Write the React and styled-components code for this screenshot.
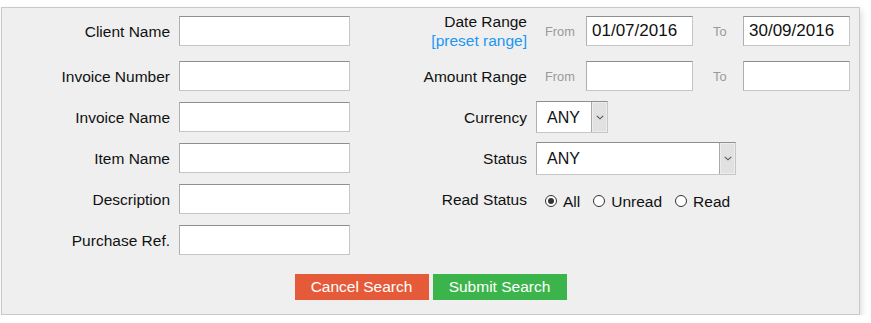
import React from 'react'
import styled, { createGlobalStyle } from 'styled-components'

const GlobalStyle = createGlobalStyle`
	body {
		margin: 0;
		background: #ffffff;
		font-family: "Liberation Sans", Arial, sans-serif;
		color: #111;
	}
`

const Panel = styled.form`
	box-sizing: border-box;
	width: 859px;
	margin: 7px 0 0 1px;
	padding: 4px 9px 14px 0;
	background: #efefef;
	border: 1px solid #c9c9c9;
	box-shadow: 2px 3px 6px rgba(0, 0, 0, 0.13);
`

const Grid = styled.div`
	display: grid;
	grid-template-columns: 168px 171px 168px 314px;
	grid-template-rows: 38px repeat(5, 30px);
	column-gap: 9px;
	row-gap: 11px;
	align-items: center;
`

const Label = styled.label`
	text-align: right;
	font-size: 15.5px;
	line-height: 19px;
	color: #111;
	grid-column: ${p => p.$col};
	grid-row: ${p => p.$row};
`

const Preset = styled.a`
	display: block;
	color: #2196f3;
	text-decoration: none;
`

const Field = styled.div`
	grid-column: ${p => p.$col};
	grid-row: ${p => p.$row};
	display: flex;
	align-items: center;
`

const TextInput = styled.input`
	box-sizing: border-box;
	width: ${p => p.$w || 171}px;
	height: 30px;
	margin: 0;
	padding: 0 5px;
	font-family: "Liberation Sans", Arial, sans-serif;
	font-size: 17px;
	color: #111;
	background: #fff;
	border: 1px solid #c6c6c6;
	border-top-color: #8f8f8f;
	border-left-color: #b0b0b0;
	outline: none;
`

const RangeLabel = styled.span`
	box-sizing: border-box;
	width: 50px;
	padding-left: ${p => p.$pad}px;
	font-size: 12.8px;
	color: #9a9a9a;
`

const SelectBox = styled.div`
	box-sizing: border-box;
	width: ${p => p.$w}px;
	height: ${p => p.$h}px;
	display: flex;
	background: #fff;
	border: 1px solid #c6c6c6;
	border-top-color: #8f8f8f;
	border-left-color: #b0b0b0;
`

const Select = styled.select`
	flex: 1;
	min-width: 0;
	appearance: none;
	border: none;
	background: transparent;
	margin: 0;
	padding: 0 0 0 10px;
	font-family: "Liberation Sans", Arial, sans-serif;
	font-size: 16px;
	color: #111;
	outline: none;
`

const Arrow = styled.span`
	box-sizing: border-box;
	width: 16px;
	display: flex;
	align-items: center;
	justify-content: center;
	background: #e1e1e1;
	border-left: 1px solid #a9a9a9;
	box-shadow: inset 0 0 0 1px #ededed;
	svg {
		display: block;
	}
`

const Radios = styled.div`
	display: flex;
	align-items: center;
	padding: 3px 0 0 9px;
	font-size: 15.5px;
	gap: 13px;
`

const RadioOption = styled.label`
	display: flex;
	align-items: center;
	gap: 6px;
	span {
		padding-top: 3px;
	}
`

const Radio = styled.input`
	appearance: none;
	box-sizing: border-box;
	width: 12px;
	height: 12px;
	margin: 0;
	border: 1px solid #333;
	border-radius: 50%;
	background: #fff;
	display: grid;
	place-items: center;
	&:checked::after {
		content: '';
		width: 6px;
		height: 6px;
		border-radius: 50%;
		background: #333;
	}
`

const Actions = styled.div`
	display: flex;
	justify-content: center;
	gap: 4px;
	margin: 19px 0 0 9px;
`

const Button = styled.button`
	width: 134px;
	height: 26px;
	border: none;
	margin: 0;
	padding: 0;
	background: ${p => p.$bg};
	color: #fff;
	font-family: "Liberation Sans", Arial, sans-serif;
	font-size: 15.5px;
`

const Chevron = () => (
	<svg width="8" height="5" viewBox="0 0 8 5">
		<path d="M0.8 0.8 L4 3.8 L7.2 0.8" fill="none" stroke="#555" strokeWidth="1.1" />
	</svg>
)

const Dropdown = ({ w, h }) => (
	<SelectBox $w={w} $h={h}>
		<Select defaultValue="ANY">
			<option>ANY</option>
		</Select>
		<Arrow><Chevron /></Arrow>
	</SelectBox>
)

const leftFields = ['Client Name', 'Invoice Number', 'Invoice Name', 'Item Name', 'Description', 'Purchase Ref.']

export default function App() {
	return (
		<>
			<GlobalStyle />
			<Panel onSubmit={e => e.preventDefault()}>
				<Grid>
					{leftFields.map((name, i) => (
						<React.Fragment key={name}>
							<Label $col={1} $row={i + 1}>{name}</Label>
							<Field $col={2} $row={i + 1}><TextInput /></Field>
						</React.Fragment>
					))}

					<Label $col={3} $row={1}>
						Date Range
						<Preset href="#">[preset range]</Preset>
					</Label>
					<Field $col={4} $row={1}>
						<RangeLabel $pad={9}>From</RangeLabel>
						<TextInput $w={107} defaultValue="01/07/2016" />
						<RangeLabel $pad={20}>To</RangeLabel>
						<TextInput $w={107} defaultValue="30/09/2016" />
					</Field>

					<Label $col={3} $row={2}>Amount Range</Label>
					<Field $col={4} $row={2}>
						<RangeLabel $pad={9}>From</RangeLabel>
						<TextInput $w={107} />
						<RangeLabel $pad={20}>To</RangeLabel>
						<TextInput $w={107} />
					</Field>

					<Label $col={3} $row={3}>Currency</Label>
					<Field $col={4} $row={3}><Dropdown w={72} h={32} /></Field>

					<Label $col={3} $row={4}>Status</Label>
					<Field $col={4} $row={4}><Dropdown w={200} h={33} /></Field>

					<Label $col={3} $row={5}>Read Status</Label>
					<Field $col={4} $row={5}>
						<Radios>
							<RadioOption><Radio type="radio" name="read" defaultChecked /><span>All</span></RadioOption>
							<RadioOption><Radio type="radio" name="read" /><span>Unread</span></RadioOption>
							<RadioOption><Radio type="radio" name="read" /><span>Read</span></RadioOption>
						</Radios>
					</Field>
				</Grid>
				<Actions>
					<Button type="button" $bg="#e55a39">Cancel Search</Button>
					<Button type="submit" $bg="#3bb54b">Submit Search</Button>
				</Actions>
			</Panel>
		</>
	)
}
